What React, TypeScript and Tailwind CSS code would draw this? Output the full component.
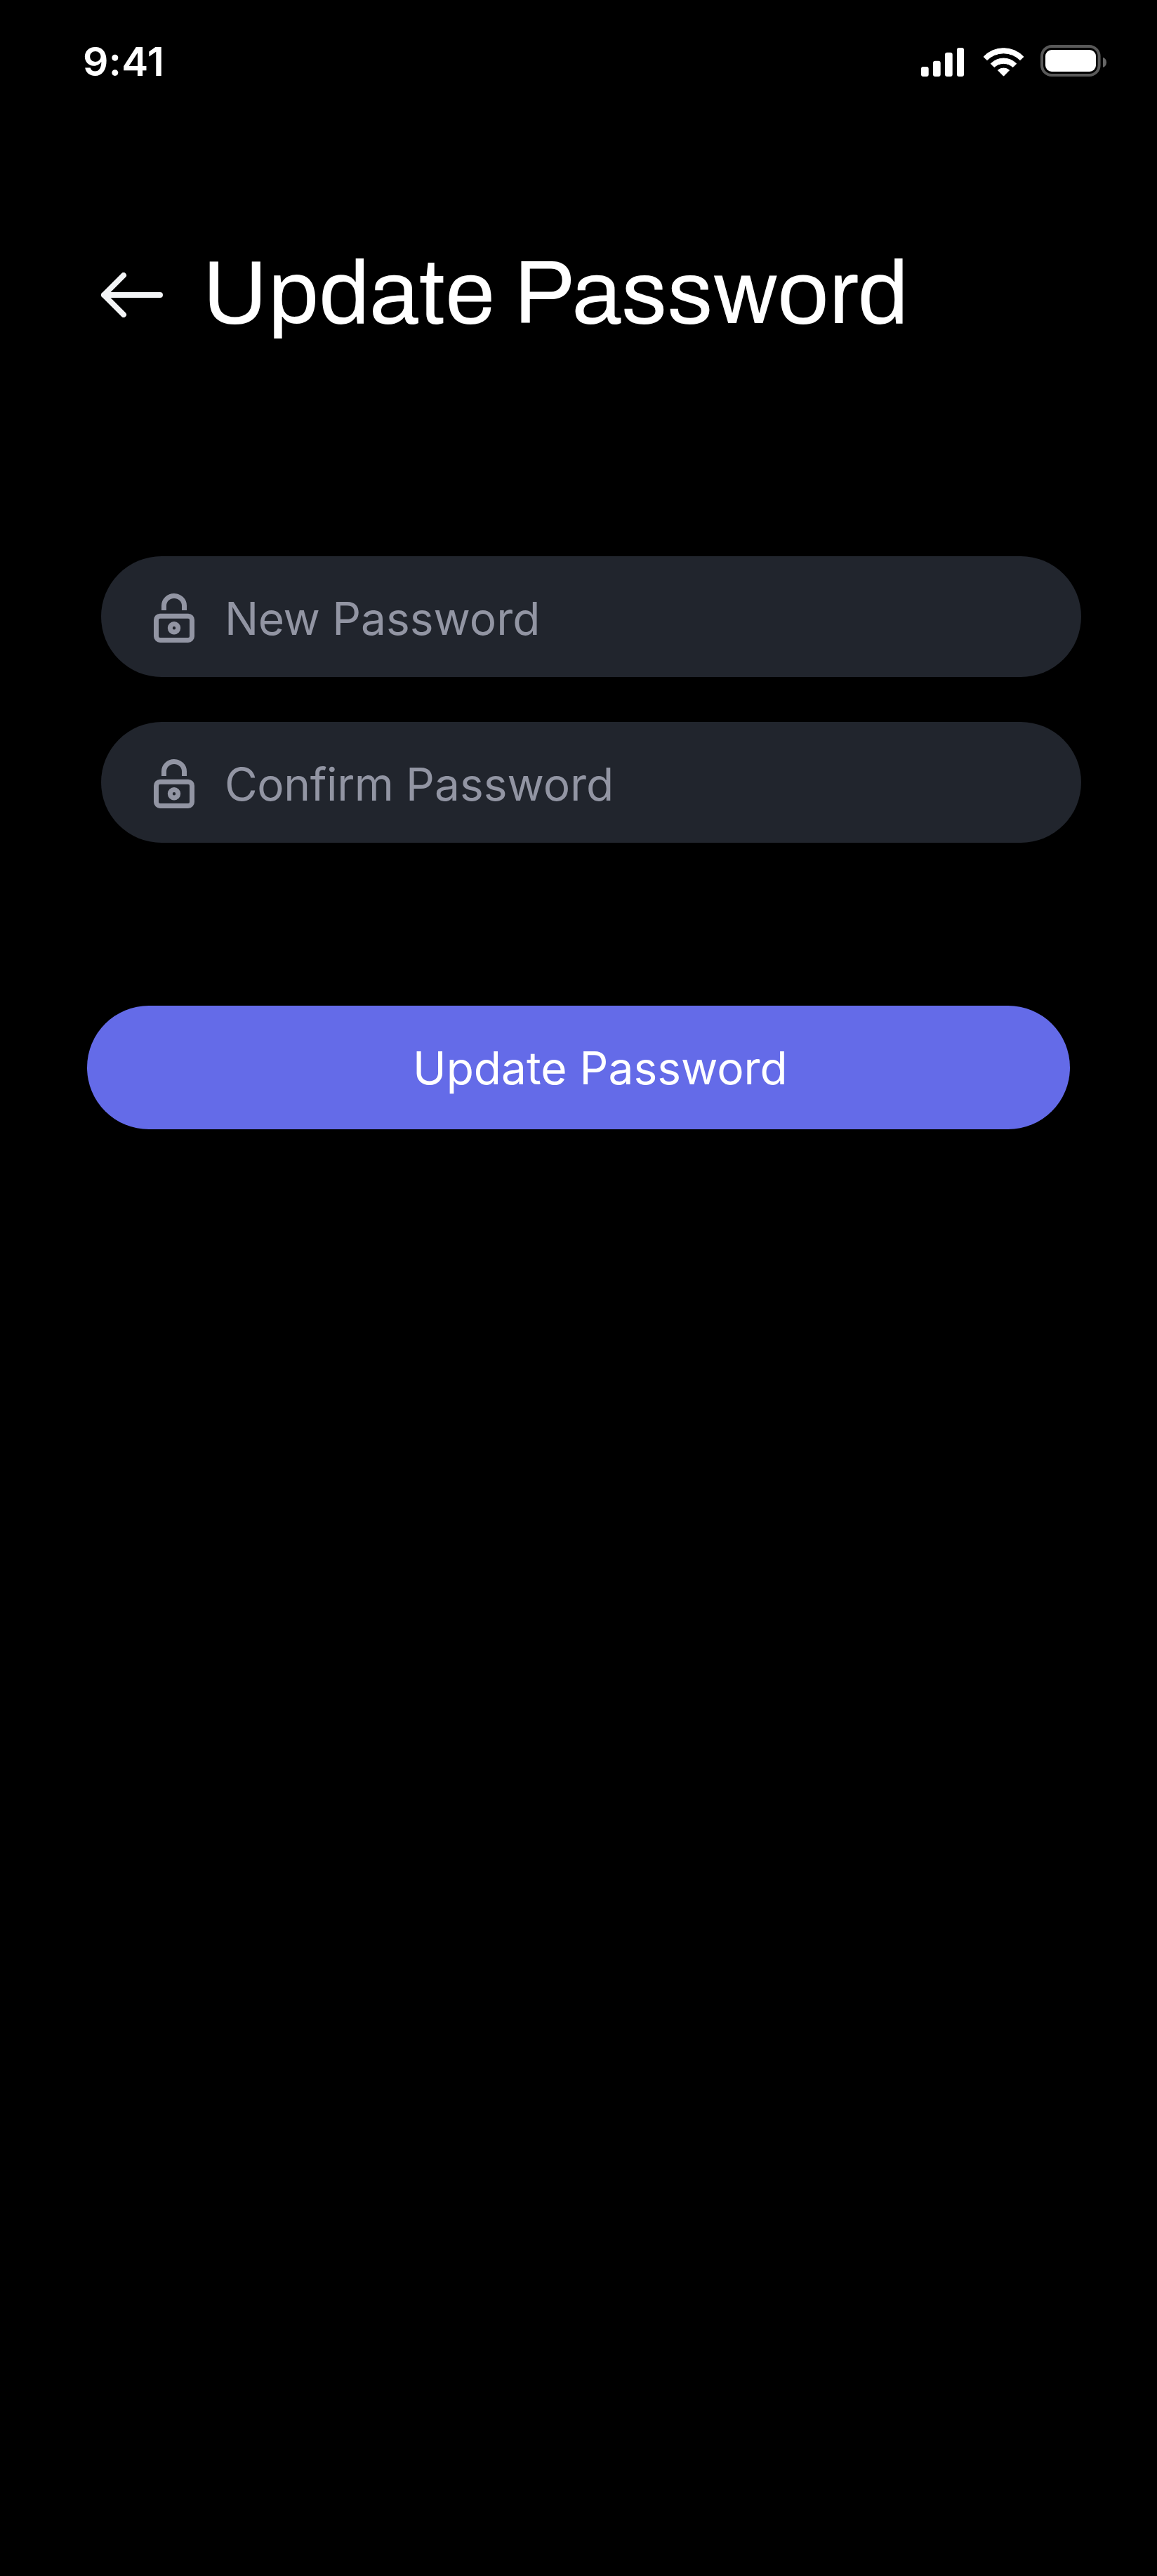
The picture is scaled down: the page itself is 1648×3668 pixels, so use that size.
import React from "react";

function SignalIcon() {
  return (
    <svg className="h-[41px] w-[61px]" viewBox="0 0 61 41" fill="#fff">
      <rect x="0" y="27" width="10.7" height="14" rx="3" />
      <rect x="17" y="18.7" width="10.7" height="22.3" rx="3" />
      <rect x="34" y="6.7" width="10.7" height="34.3" rx="3" />
      <rect x="51" y="0" width="10" height="41" rx="3" />
    </svg>
  );
}

function WifiIcon() {
  return (
    <svg className="h-[41px] w-[59px]" viewBox="0 0 59 41" fill="#fff" stroke="#fff" strokeWidth="1" strokeLinejoin="round">
      <path d="M1 12.8A39.5 39.5 0 0 1 58 12.8L53 17.6A33 33 0 0 0 6 17.6Z" />
      <path d="M11.3 22.7A25.5 25.5 0 0 1 47.7 22.7L42.8 27.6A19.6 19.6 0 0 0 16.2 27.6Z" />
      <path d="M21.4 31.9A13 13 0 0 1 37.6 31.9L29.5 40.2Z" />
    </svg>
  );
}

function BatteryIcon() {
  return (
    <svg className="h-[45px] w-[94px]" viewBox="0 0 94 45">
      <rect x="2" y="2" width="81.6" height="41" rx="14" fill="none" stroke="#595959" strokeWidth="4" />
      <rect x="7" y="7" width="72" height="31" rx="9" fill="#fff" />
      <path d="M89 17.7A7.6 7.6 0 0 1 89 32Z" fill="#666" />
    </svg>
  );
}

function ArrowLeftIcon() {
  return (
    <svg className="h-16 w-[88px]" viewBox="0 0 88 64" fill="none" stroke="#f3f4f6" strokeWidth="8" strokeLinecap="round" strokeLinejoin="round">
      <path d="M84 32H4M32 4L4 32L32 60" />
    </svg>
  );
}

function LockIcon() {
  return (
    <svg className="h-[70px] w-[58px]" viewBox="0 0 58 70" fill="none" stroke="#9295a3" strokeWidth="7">
      <path d="M14.5 24V17.5A14.5 14 0 0 1 43.5 17.5V24" />
      <rect x="3.5" y="32.2" width="51" height="34.3" rx="5.5" />
      <circle cx="29" cy="49.3" r="5.7" />
    </svg>
  );
}

function PasswordField({ prefix }: { prefix: string }) {
  return (
    <div className="flex h-[172px] w-[1396px] items-center rounded-full bg-[#21252d] pl-[75px]">
      <div className="mt-1">
        <LockIcon />
      </div>
      <span className="ml-[43px] pt-[5px] text-[64px] leading-[80px] whitespace-pre text-[#9295a3]">
        <span className="tracking-[-0.4px]">{prefix + " "}</span>Password
      </span>
    </div>
  );
}

export default function App() {
  return (
    <div className="h-[3668px] w-[1648px] overflow-hidden bg-black font-['Inter',sans-serif]">
      <header className="flex h-[132px] items-start justify-between pr-[72px] pl-[118px]">
        <span className="mt-[53px] text-[57px] leading-[70px] font-[570] tracking-[0.3px] text-white">9:41</span>
        <div className="mt-16 flex items-start">
          <div className="mt-1">
            <SignalIcon />
          </div>
          <div className="mt-1 ml-[27px]">
            <WifiIcon />
          </div>
          <div className="ml-[23px]">
            <BatteryIcon />
          </div>
        </div>
      </header>

      <main>
        <div className="flex items-start pt-[216px] pl-36">
          <div className="mt-10">
            <ArrowLeftIcon />
          </div>
          <h1 className="ml-[56px] font-['Archivo','Liberation_Sans',sans-serif] text-[128px] leading-[139px] whitespace-nowrap text-white">
            Update Password
          </h1>
        </div>

        <form className="pt-[305px]">
          <div className="flex flex-col gap-16 pl-36">
            <PasswordField prefix="New" />
            <PasswordField prefix="Confirm" />
          </div>
          <button
            type="button"
            className="mt-[232px] ml-[124px] flex h-[176px] w-[1400px] items-center rounded-full bg-[#646be8] pt-[2px] pl-[464px] text-[64px] leading-[80px] whitespace-nowrap text-white"
          >
            Update Password
          </button>
        </form>
      </main>
    </div>
  );
}
